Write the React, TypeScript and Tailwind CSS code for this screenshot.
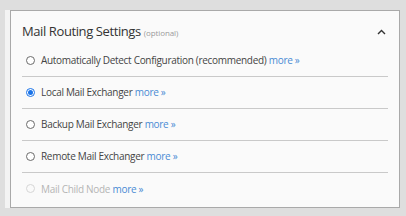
import React from 'react';

type Option = {
  label: string;
  checked?: boolean;
  disabled?: boolean;
};

const options: Option[] = [
  { label: 'Automatically Detect Configuration (recommended)' },
  { label: 'Local Mail Exchanger', checked: true },
  { label: 'Backup Mail Exchanger' },
  { label: 'Remote Mail Exchanger' },
  { label: 'Mail Child Node', disabled: true },
];

function Radio({ checked, disabled }: { checked?: boolean; disabled?: boolean }) {
  if (checked) {
    return (
      <span className="w-[9px] h-[9px] rounded-full border border-[#1a73e8] bg-white flex items-center justify-center shrink-0">
        <span className="w-[5px] h-[5px] rounded-full bg-[#1a73e8]" />
      </span>
    );
  }
  return (
    <span
      className={
        disabled
          ? 'w-[9px] h-[9px] rounded-full border border-[#d6d6d6] bg-[#fafafa] shrink-0'
          : 'w-[9px] h-[9px] rounded-full border border-[#6b6b6b] bg-white shrink-0'
      }
    />
  );
}

export default function App() {
  return (
    <div
      className="w-[406px] h-[216px] bg-[#dedede] pt-[10px] overflow-hidden"
      style={{ fontFamily: '"Open Sans", "Noto Sans", sans-serif' }}
    >
      <div className="ml-[5px] pl-[5px] w-[395px] bg-[#f3f3f3]">
        <div className="w-[390px] h-[198px] border border-[#a9a9a9] bg-[#fafafa] px-[11px]">
          {/* header */}
          <div className="flex items-start justify-between pt-[12px] pb-[4px]">
            <h2 className="text-[13px] leading-[16px] text-[#333] tracking-[-0.4px] font-normal">
              Mail Routing Settings{' '}
              <span className="text-[8px] text-[#9a9a9a] tracking-[-0.1px]">(optional)</span>
            </h2>
            <svg width="9" height="6" viewBox="0 0 9 6" className="mt-[6px] mr-[2px]">
              <path d="M1 5 L4.5 1.5 L8 5" fill="none" stroke="#333" strokeWidth="1.4" />
            </svg>
          </div>

          {/* options */}
          <div className="flex flex-col">
            {options.map((o, i) => (
              <div
                key={o.label}
                className={
                  i < options.length - 1
                    ? 'h-[32px] flex items-center gap-[6px] pl-[4px] pb-[1px] border-b border-[#c9c9c9]'
                    : 'h-[31px] flex items-center gap-[6px] pl-[4px]'
                }
              >
                <Radio checked={o.checked} disabled={o.disabled} />
                <span
                  className={
                    o.disabled
                      ? 'text-[10px] leading-[14px] tracking-[-0.3px] text-[#b5b5b5]'
                      : 'text-[10px] leading-[14px] tracking-[-0.3px] text-[#444]'
                  }
                >
                  {o.label}{' '}
                  <a className="text-[#4a8bd4] cursor-pointer">more »</a>
                </span>
              </div>
            ))}
          </div>
        </div>
      </div>
    </div>
  );
}
